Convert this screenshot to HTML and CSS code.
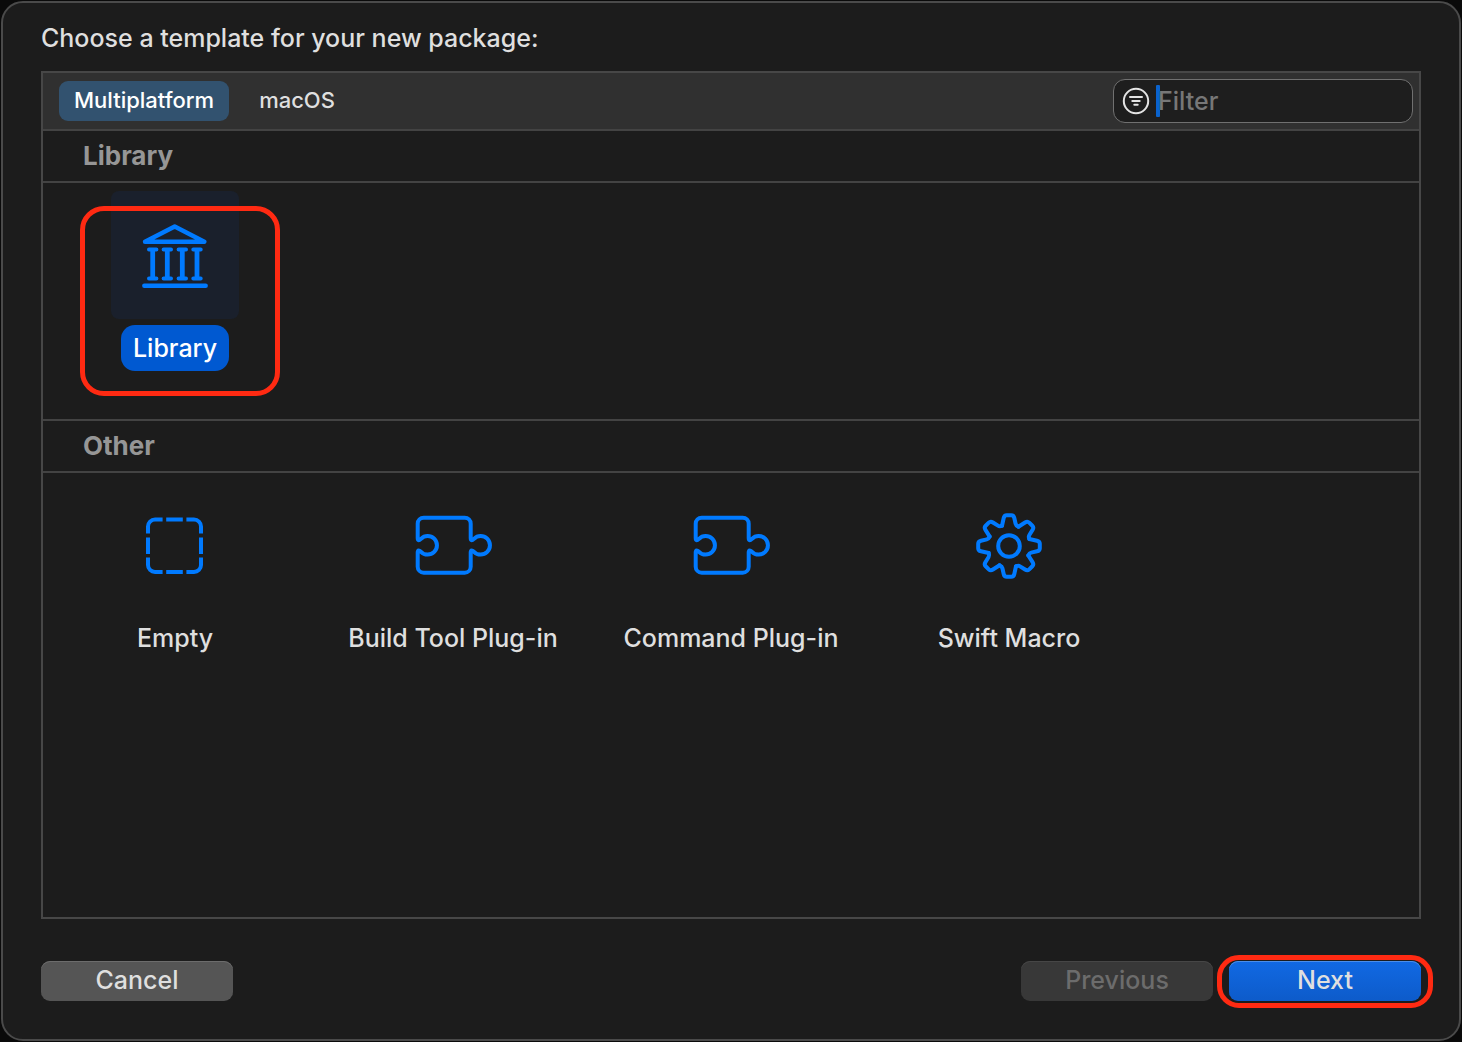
FILE: index.html
```html
<!DOCTYPE html>
<html lang="en">
<head>
<meta charset="utf-8">
<title>New Package</title>
<link rel="stylesheet" href="styles.css">
</head>
<body>
<svg class="symbols" aria-hidden="true">
  <symbol id="icon-library" viewBox="0 0 128 128">
    <path d="M34 50.800 63.700 35.500 93.300 50.800Z M33.300 94.700H94.700" stroke-width="4.400"/>
    <path d="M38 58.500h7.400M52.600 58.500H60M67.600 58.500H75M82.300 58.500h7.400M38 87.600h7.400M52.600 87.600H60M67.600 87.600H75M82.300 87.600h7.400" stroke-width="4"/>
    <path d="M41.700 58.500v29M56.300 58.500v29M71.300 58.500v29M86 58.500v29" stroke-width="4.800" stroke-linecap="butt"/>
  </symbol>
  <symbol id="icon-empty" viewBox="0 0 128 128">
    <path d="M37 52.600V45.500a7 7 0 0 1 7-7h7.600M55.200 38.500h16.600M75.400 38.500H83a7 7 0 0 1 7 7v7.100M90 56.500v16.600M90 76.500V84a7 7 0 0 1-7 7h-7.600M71.800 91H55.200M51.600 91H44a7 7 0 0 1-7-7v-7.500M37 73.100V56.500" stroke-linecap="butt"/>
  </symbol>
  <symbol id="icon-plugin" viewBox="0 0 128 128">
    <path d="M34.700 36.700H75.700a6 6 0 0 1 6 6V57c0 3 1.500 2.500 3.300.8A9.300 9.300 0 1 1 85 70.800c-1.800-1.700-3.300-2.200-3.300.8V85.700a6 6 0 0 1-6 6h-41a6 6 0 0 1-6-6V71.600c0-3 1.500-2.500 3.300-.8A9.300 9.300 0 1 0 32 57.800c-1.800 1.700-3.300 2.200-3.300-.8V42.700a6 6 0 0 1 6-6Z"/>
  </symbol>
  <symbol id="icon-gear" viewBox="0 0 128 128">
    <circle cx="64" cy="65" r="10.800"/>
    <g transform="translate(64 65)">
      <path id="tooth" d="M-7-20.300-5.300-28Q-4.700-30.800-2.200-30.800H2.200Q4.700-30.800 5.300-28L6.600-22.200Q7-20.300 9.400-19.300"/>
      <use href="#tooth" transform="rotate(45)"/>
      <use href="#tooth" transform="rotate(90)"/>
      <use href="#tooth" transform="rotate(135)"/>
      <use href="#tooth" transform="rotate(180)"/>
      <use href="#tooth" transform="rotate(225)"/>
      <use href="#tooth" transform="rotate(270)"/>
      <use href="#tooth" transform="rotate(315)"/>
    </g>
  </symbol>
</svg>

<main class="dialog">
  <h1 class="dialog-title">Choose a template for your new package:</h1>

  <div class="panel">
    <div class="toolbar">
      <div class="tabs">
        <button class="tab tab-active" type="button">Multiplatform</button>
        <button class="tab" type="button">macOS</button>
      </div>
      <label class="filter">
        <svg class="filter-icon" viewBox="0 0 28 28" aria-hidden="true">
          <circle cx="14" cy="14" r="12.200"/>
          <path d="M8 10h12M10.300 14h7.400M12.300 17.800h3.400"/>
        </svg>
        <span class="caret"></span>
        <input class="filter-input" type="text" placeholder="Filter" aria-label="Filter">
      </label>
    </div>

    <section class="group">
      <h2 class="group-title">Library</h2>
      <div class="tiles">
        <button class="tile tile-selected" type="button">
          <svg class="tile-icon" aria-hidden="true"><use href="#icon-library"/></svg>
          <span class="tile-label">Library</span>
        </button>
      </div>
    </section>

    <section class="group">
      <h2 class="group-title">Other</h2>
      <div class="tiles">
        <button class="tile" type="button">
          <svg class="tile-icon" aria-hidden="true"><use href="#icon-empty"/></svg>
          <span class="tile-label">Empty</span>
        </button>
        <button class="tile" type="button">
          <svg class="tile-icon" aria-hidden="true"><use href="#icon-plugin"/></svg>
          <span class="tile-label">Build Tool Plug-in</span>
        </button>
        <button class="tile" type="button">
          <svg class="tile-icon" aria-hidden="true"><use href="#icon-plugin"/></svg>
          <span class="tile-label">Command Plug-in</span>
        </button>
        <button class="tile" type="button">
          <svg class="tile-icon" aria-hidden="true"><use href="#icon-gear"/></svg>
          <span class="tile-label">Swift Macro</span>
        </button>
      </div>
    </section>
  </div>

  <footer class="actions">
    <button class="button" type="button">Cancel</button>
    <div class="actions-end">
      <button class="button" type="button" disabled>Previous</button>
      <button class="button button-primary" type="button">Next</button>
    </div>
  </footer>
</main>
</body>
</html>
```
FILE: styles.css
```css
* {
  box-sizing: border-box;
}

body {
  margin: 0;
  padding: 1px;
  min-height: 100vh;
  display: flex;
  background: #0a0a0a;
  color: #dfdfdf;
  font-family: Inter, "Liberation Sans", sans-serif;
  font-size: 25px;
  font-weight: 500;
}

button,
input {
  font: inherit;
  color: inherit;
}

button {
  border: 0;
  padding: 0;
  background: none;
}

.symbols {
  position: absolute;
  width: 0;
  height: 0;
}

.dialog {
  flex: 1;
  display: flex;
  flex-direction: column;
  padding: 20px 38px 38px;
  border: 2px solid #4a4a4a;
  border-radius: 22px;
  background: #1c1c1c;
}

.dialog-title {
  margin: 0 0 18px;
  font-size: 25px;
  font-weight: 500;
  line-height: 30px;
}

.panel {
  flex: 1;
  border: 2px solid #474747;
}

.toolbar {
  display: flex;
  justify-content: space-between;
  align-items: center;
  padding: 6px 6px 6px 16px;
  background: #303030;
}

.tabs {
  display: flex;
  gap: 15px;
}

.tab {
  height: 40px;
  padding: 0 15px 2px;
  border-radius: 9px;
  font-size: 22px;
}

.tab-active {
  background: #32526f;
  color: #fff;
}

.filter {
  display: flex;
  align-items: center;
  width: 300px;
  height: 44px;
  padding: 0 8px;
  border: 1px solid #707070;
  border-radius: 12px;
  background: #1e1e1e;
}

.filter-icon {
  width: 28px;
  height: 28px;
  fill: none;
  stroke: #e4e4e4;
  stroke-width: 2;
  stroke-linecap: round;
}

.caret {
  width: 4px;
  height: 32px;
  margin: 0 -2px 0 6px;
  border-radius: 1px;
  background: #0a63ce;
}

.filter-input {
  flex: 1;
  min-width: 0;
  padding: 0;
  border: 0;
  outline: 0;
  background: none;
}

.filter-input::placeholder {
  color: #777;
  opacity: 1;
}

.group-title {
  margin: 0;
  padding: 0 40px;
  border: solid #434343;
  border-width: 2px 0;
  color: #969696;
  font-size: 26px;
  font-weight: 700;
  line-height: 50px;
}

.tiles {
  display: flex;
  flex-wrap: wrap;
  gap: 14px;
  padding: 8px 0 48px;
}

.tile {
  position: relative;
  display: flex;
  flex-direction: column;
  align-items: center;
  gap: 6px;
  width: 264px;
}

.tile-icon {
  width: 128px;
  height: 128px;
  border-radius: 8px;
  fill: none;
  stroke: #007aff;
  stroke-width: 4;
  stroke-linecap: round;
  stroke-linejoin: round;
}

.tile-label {
  padding: 0 12px;
  border-radius: 14px;
  line-height: 46px;
}

.tile-selected .tile-icon {
  background: #1a202c;
}

.tile-selected .tile-label {
  background: #0059d1;
  color: #fff;
}

/* Red callout rings over the selected template and the next step */
.tile-selected::after,
.button-primary::after {
  content: "";
  position: absolute;
  border: 5px solid #ff2a12;
}

.tile-selected::after {
  inset: 15px 27px -25px 37px;
  border-radius: 24px;
}

.button-primary::after {
  inset: -6px -12px -7px;
  border-radius: 22px;
}

.actions {
  display: flex;
  justify-content: space-between;
  margin-top: 42px;
}

.actions-end {
  display: flex;
  gap: 16px;
}

.button {
  position: relative;
  width: 192px;
  height: 40px;
  padding-bottom: 2px;
  border-radius: 9px;
  background: #555;
  box-shadow: inset 0 1px #6c6c6c;
}

.button:disabled {
  background: #383838;
  box-shadow: inset 0 1px #464646;
  color: #6c6c6c;
}

.button-primary {
  background: linear-gradient(#1169e3, #0d5bca);
  box-shadow: inset 0 1px #4a8eea;
}
```
